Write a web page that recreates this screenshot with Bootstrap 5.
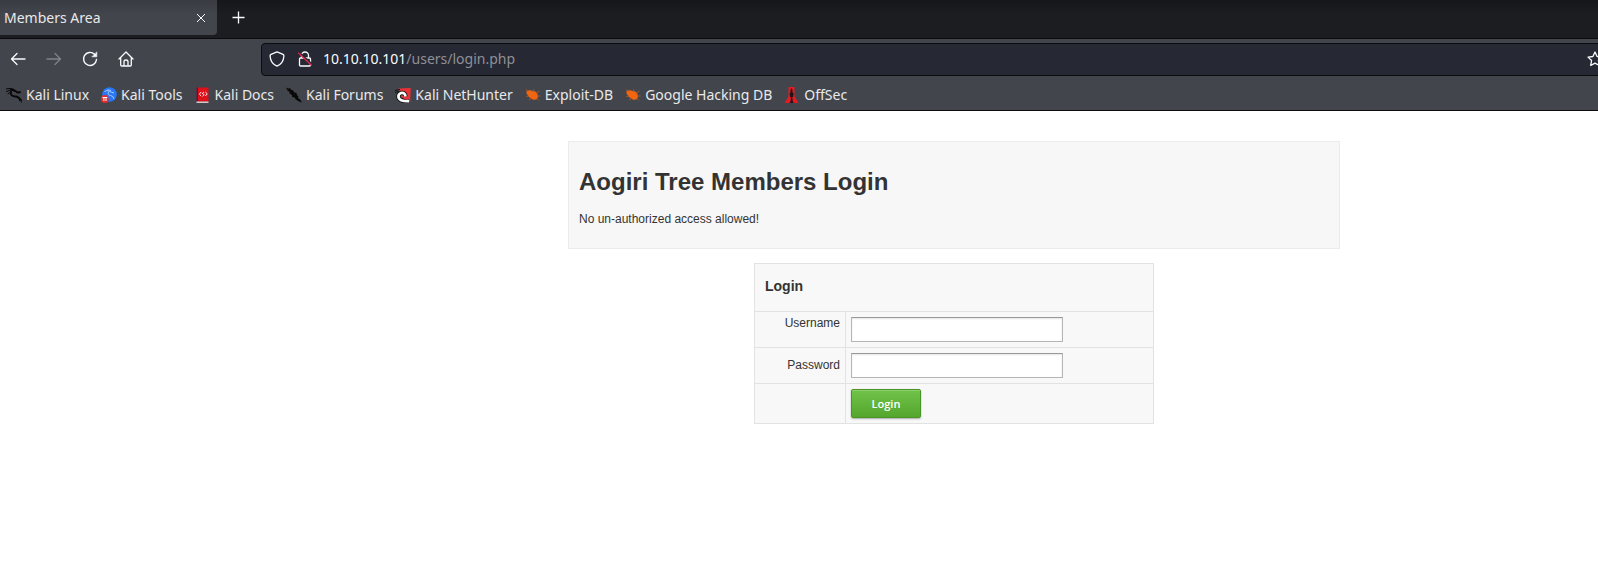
<!DOCTYPE html>
<html lang="en">
<head>
<meta charset="utf-8">
<meta name="viewport" content="width=device-width, initial-scale=1">
<title>Members Area</title>
<link href="https://cdn.jsdelivr.net/npm/bootstrap@5.3.0/dist/css/bootstrap.min.css" rel="stylesheet">
<style>
  body { background: #fff; overflow-x: hidden; }
  svg { display: block; flex: none; }
  .browser { font: 14px/20px "Noto Sans", sans-serif; color: #e9e9ea; background: #42454c; border-bottom: 1px solid #0c0c0f; }
  .browser button { background: none; border: 0; padding: 0; color: #fbfbfe; }
  .tabs { height: 39px; background: linear-gradient(#15161a, #1c1d21 14px, #1c1d21); border-bottom: 1px solid #0c0c0f; }
  .tab-current { width: 217px; height: 35px; padding: 0 10px 0 4px; background: linear-gradient(#393b41, #42454c 14px); border-radius: 0 0 4px 0; }
  .tab-new { margin-left: 15px; height: 35px; }
  .toolbar { height: 40px; padding-left: 10px; overflow: hidden; }
  .nav-tools { width: 251px; gap: 20px; }
  .address { height: 33px; margin-right: -16px; padding: 0 10px 0 7px; background: #262833; border: 1px solid #0c0c0f; border-radius: 4px; }
  .address-text { margin-left: 10px; color: #8f9097; }
  .address-text span { color: #fbfbfe; }
  .bookmarks { height: 31px; padding: 0 6px; gap: 12px; }
  .bookmarks a { color: #e9e9ea; text-decoration: none; gap: 4px; white-space: nowrap; }
  .members { padding: 30px 0 20px 310px; font: 12px/18px "Liberation Sans", Arial, sans-serif; color: #333; }
  .banner { max-width: 772px; margin: 0 auto 14px; padding: 22px 10px 20px; background: #f7f7f7; border: 1px solid #ebebeb; }
  .banner h1 { font-size: 24px; line-height: 36px; font-weight: 700; margin: 0 0 10px; }
  .login { width: 400px; margin: 0 auto; background: #f8f8f8; border-collapse: collapse; }
  .login th, .login td { border: 1px solid #e2e2e2; padding: 5px; vertical-align: top; }
  .login thead th { height: 48px; padding: 0 10px; vertical-align: middle; }
  .login h2 { font-size: 14px; line-height: 20px; font-weight: 700; margin: 0; padding-bottom: 4px; }
  .login tbody th { width: 91px; font-weight: 400; text-align: right; padding: 2px 5px 4px; }
  .login tbody th.mid { vertical-align: middle; }
  .login input { display: block; width: 212px; height: 25px; padding: 2px 4px; background: #fff; border: 1px solid #b5b5b5; border-top-color: #999; box-shadow: inset 0 1px 2px #e4e4e4; border-radius: 0; }
  .btn-login { display: block; width: 70px; height: 29px; padding: 0; font: 600 11px/20px "Open Sans", sans-serif; color: #fff; background: linear-gradient(#70c24a, #54a72c); border: 1px solid #4a9424; border-radius: 2px; box-shadow: inset 0 1px 0 #91d070, 0 1px 2px #aaa; }
</style>
</head>
<body>
<header class="browser">
  <div class="tabs d-flex align-items-start">
    <div class="tab-current d-flex align-items-center justify-content-between">
      <span>Members Area</span>
      <button type="button" aria-label="Close tab"><svg width="12" height="12" viewBox="0 0 12 12" stroke="currentColor" fill="none"><path d="M2 2l8 8M10 2l-8 8"/></svg></button>
    </div>
    <button class="tab-new" type="button" aria-label="New tab"><svg width="13" height="13" viewBox="0 0 13 13" stroke="currentColor" stroke-width="1.3"><path d="M6.5 .5v12M.5 6.500h12"/></svg></button>
  </div>
  <nav class="toolbar d-flex align-items-center" aria-label="Navigation">
    <div class="nav-tools d-flex flex-shrink-0">
      <button type="button" aria-label="Back"><svg width="16" height="16" viewBox="0 0 16 16" fill="none" stroke="currentColor" stroke-width="1.3" stroke-linecap="round" stroke-linejoin="round"><path d="M15 8H1.500M7 2.500L1.500 8 7 13.500"/></svg></button>
      <button type="button" aria-label="Forward"><svg width="16" height="16" viewBox="0 0 16 16" fill="none" stroke="#808288" stroke-width="1.3" stroke-linecap="round" stroke-linejoin="round"><path d="M1 8h13.500M9 2.500L14.500 8 9 13.500"/></svg></button>
      <button type="button" aria-label="Reload"><svg width="16" height="16" viewBox="0 0 16 16" fill="none" stroke="currentColor" stroke-width="1.4" stroke-linecap="round"><path d="M12.500 3.200A6.500 6.500 0 1 0 14.500 8.500"/><path d="M14.800 1.200v4.600h-4.600z" fill="currentColor" stroke-width=".6" stroke-linejoin="round"/></svg></button>
      <button type="button" aria-label="Home"><svg width="16" height="16" viewBox="0 0 16 16" fill="none" stroke="currentColor" stroke-width="1.3" stroke-linecap="round" stroke-linejoin="round"><path d="M1 8L8 1l7 7M2.700 6.600V14q0 1 1 1h8.600q1 0 1-1V6.600M6 15v-4.200Q6 9 8 9t2 1.800V15"/></svg></button>
    </div>
    <div class="address d-flex align-items-center flex-grow-1">
      <svg width="16" height="16" viewBox="0 0 16 16" fill="none" stroke="#fbfbfe" stroke-width="1.3" stroke-linejoin="round"><path d="M8 .8L14 3.300Q15 3.700 14.900 5 14.500 12.300 8 15.200 1.500 12.300 1.100 5 1 3.700 2 3.300z"/></svg>
      <svg class="ms-2 ps-1" width="20" height="16" viewBox="0 0 16 16" fill="none" stroke="#fbfbfe" stroke-width="1.3"><path d="M4.500 7V4.500a3.500 3.500 0 0 1 7 0V7M3.500 7h9q1 0 1 1v6q0 1-1 1h-9q-1 0-1-1V8q0-1 1-1z"/><path d="M1.700 1.300l13.300 12" stroke="#262833" stroke-width="2"/><path d="M1.200 1.800l13.300 12.500" stroke="#e22850" stroke-width="1.300"/></svg>
      <span class="address-text flex-grow-1"><span>10.10.10.101</span>/users/login.php</span>
      <svg width="16" height="16" viewBox="0 0 16 16" fill="none" stroke="#fbfbfe" stroke-width="1.3" stroke-linejoin="round"><path d="M8 1l2.100 4.500 4.900.6-3.600 3.400.9 5L8 12.100 3.700 14.500l.9-5L1 6.100l4.900-.6z"/></svg>
    </div>
  </nav>
  <nav class="bookmarks d-flex align-items-center" aria-label="Bookmarks">
    <a class="d-flex align-items-center" href="#"><svg width="16" height="16" viewBox="0 0 16 16" fill="none" stroke="#080808" stroke-linecap="round" stroke-linejoin="round"><path d="M0 2l5-.7 3 1.200M.5 4.500L5 3M2 7l3-2.500" stroke-width="1"/><path d="M5 2.500L9.500 4l2 1.500 2.500-.3M5 5Q4 8.500 8 9.300q3.500.2 5 1.700.9.800 1 2.200" stroke-width="1.900"/><path d="M13 11l3 2-1 .3.500 2" stroke-width=".8"/></svg>Kali Linux</a>
    <a class="d-flex align-items-center" href="#"><svg width="16" height="16" viewBox="0 0 16 16"><circle cx="8.500" cy="7.500" r="7.300" fill="#2777f5"/><path d="M3.500 4.500q3-2 5 0L13 6M6 3l4 .3M7.500 5q-1.500 3 2 3.500 3 .4 3.500 3.500" fill="none" stroke="#a9caff" stroke-width="1"/><circle cx="3.800" cy="12" r="3.900" fill="#e62b2b"/><path d="M1.500 10.500h4.800M2.900 10.500v3.500M5 10.500v3.500" stroke="#fff" fill="none"/></svg>Kali Tools</a>
    <a class="d-flex align-items-center" href="#"><svg width="16" height="16" viewBox="0 0 16 16"><path d="M1.500.5h12v14h-12z" fill="#df1018"/><path d="M1.500.5H3v14H1.500z" fill="#222b5a"/><path d="M1.500 14.500h12V16h-12z" fill="#d9c8c8"/><path d="M6.200 5L4.300 7.200l1.900 1.800M10.300 5l1.900 1.800L10.300 9M9 5L7.300 6.400l1.900 1.300L7.500 9.300" fill="none" stroke="#fff" stroke-width=".9"/></svg>Kali Docs</a>
    <a class="d-flex align-items-center" href="#"><svg width="16" height="16" viewBox="0 0 16 16"><path d="M0 .5l2.500 1.200L4 .8l.8 2 2.200.4 1 2 2.500.8.500 2 1.500 1.500L12 11l2 1.200 2 3.300-3-1-3.500-2.300-.5-1.500-3-1L6 8 3.500 6.500 3.700 5 1.500 3.500z" fill="#080808"/></svg>Kali Forums</a>
    <a class="d-flex align-items-center" href="#"><svg width="16" height="16" viewBox="0 0 16 16"><path d="M3 1.500L15.700 1l-.5 13.500-3 .7z" fill="#ec3038"/><path d="M0 3.500l5-1.200M0 5.500l4-1" stroke="#111" stroke-width="1"/><path d="M14 14.200Q5 14.500 3.500 10.500 3 7 6 6q4-.7 4.500 3.500" fill="none" stroke="#111" stroke-width="4.400"/><path d="M14 14.200Q5 14.500 3.500 10.500 3 7 6 6q4-.7 4.500 3.500" fill="none" stroke="#fff" stroke-width="2.700"/><path d="M6 9l7 3.500" stroke="#ec3038" stroke-width="1.700"/></svg>Kali NetHunter</a>
    <a class="d-flex align-items-center" href="#"><svg width="16" height="16" viewBox="0 0 16 16"><path d="M1.500 4q3.500-1.700 6 0l3 .5 2 2.500.5 3-1.500 2.500-3.500.3L4 10 1.500 6.500z" fill="#f26511"/><path d="M3 5L1.500 2.500M8 5L9 2M10.500 6.500l4-2.500M12 9h3.500M4 9l-3 .5M7 11l-3 2M11.500 11l2.500 2.500" fill="none" stroke="#b95b20" stroke-width=".8"/></svg>Exploit-DB</a>
    <a class="d-flex align-items-center" href="#"><svg width="16" height="16" viewBox="0 0 16 16"><path d="M1.500 4q3.500-1.700 6 0l3 .5 2 2.500.5 3-1.500 2.500-3.500.3L4 10 1.500 6.500z" fill="#f26511"/><path d="M3 5L1.500 2.500M8 5L9 2M10.500 6.500l4-2.500M12 9h3.500M4 9l-3 .5M7 11l-3 2M11.500 11l2.500 2.500" fill="none" stroke="#b95b20" stroke-width=".8"/></svg>Google Hacking DB</a>
    <a class="d-flex align-items-center" href="#"><svg width="16" height="16" viewBox="0 0 16 16"><path d="M4.500 0h6v9.500l4 6.500H.5l4-6.500z" fill="#e31b23"/><path d="M7.500 1l1 2v2.500l1.200 1-.7 3.500h-.7l.5 4.500 1 1.500H5.500l1-1.500.5-4.500h-.8L5.500 6.500l1-1V3z" fill="#211316"/></svg>OffSec</a>
  </nav>
</header>

<main class="members">
  <section class="banner">
    <h1>Aogiri Tree Members Login</h1>
    <p class="mb-0">No un-authorized access allowed!</p>
  </section>
  <form>
    <table class="login">
      <thead>
        <tr><th colspan="2"><h2>Login</h2></th></tr>
      </thead>
      <tbody>
        <tr><th scope="row"><label for="username">Username</label></th><td><input id="username" type="text"></td></tr>
        <tr><th scope="row" class="mid"><label for="password">Password</label></th><td><input id="password" type="password"></td></tr>
        <tr><th></th><td><button class="btn-login" type="submit">Login</button></td></tr>
      </tbody>
    </table>
  </form>
</main>
<script src="https://cdn.jsdelivr.net/npm/bootstrap@5.3.0/dist/js/bootstrap.bundle.min.js"></script>
</body>
</html>
